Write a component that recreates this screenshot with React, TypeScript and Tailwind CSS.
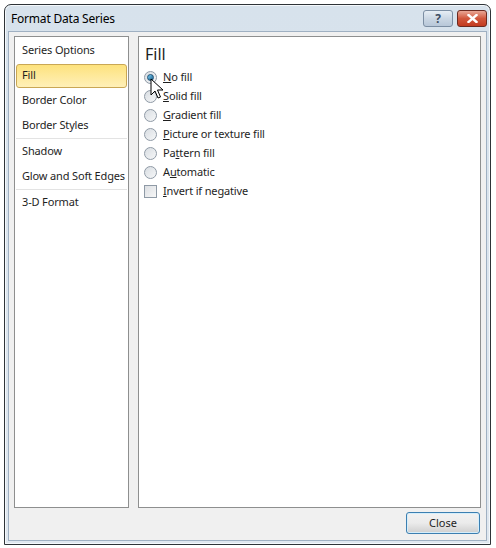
import React from 'react';

const font = { fontFamily: '"Noto Sans", "Open Sans", sans-serif' };

const navItems: { label: string; active?: boolean; sepAfter?: boolean }[] = [
  { label: 'Series Options' },
  { label: 'Fill', active: true },
  { label: 'Border Color' },
  { label: 'Border Styles', sepAfter: true },
  { label: 'Shadow' },
  { label: 'Glow and Soft Edges', sepAfter: true },
  { label: '3-D Format' },
];

const options: { pre: string; key: string; post: string; checked?: boolean }[] = [
  { pre: '', key: 'N', post: 'o fill', checked: true },
  { pre: '', key: 'S', post: 'olid fill' },
  { pre: '', key: 'G', post: 'radient fill' },
  { pre: '', key: 'P', post: 'icture or texture fill' },
  { pre: 'Pa', key: 't', post: 'tern fill' },
  { pre: 'A', key: 'u', post: 'tomatic' },
];

function Radio({ checked }: { checked?: boolean }) {
  return (
    <span className="w-[13px] h-[13px] rounded-full border border-[#8f9aa6] bg-gradient-to-br from-[#d8dde2] to-[#f6f7f8] flex items-center justify-center shrink-0">
      {checked && (
        <span className="w-[7px] h-[7px] rounded-full bg-gradient-to-br from-[#7ad0f6] to-[#1a5f8c] border border-[#1c4f74]" />
      )}
    </span>
  );
}

function Cursor() {
  return (
    <svg className="absolute left-[150px] top-[78px]" width="14" height="22" viewBox="0 0 14 22">
      <path d="M1 1 L1 17 L5 13 L8 20 L10.5 19 L7.5 12 L13 12 Z" fill="#fff" stroke="#000" strokeWidth="1" strokeLinejoin="miter" />
    </svg>
  );
}

export default function App() {
  return (
    <div className="w-[496px] h-[548px] bg-white relative" style={font}>
      <div className="absolute left-[4px] top-[4px] w-[487px] h-[541px] border border-[#2e3338] rounded-t-[7px] bg-gradient-to-b from-[#d7e2ec] to-[#dfe7ef] flex flex-col shadow-[inset_0_0_0_1px_#f4f8fb]">
        {/* title bar */}
        <div className="h-[26px] flex items-center pl-[6px] pr-[3px] pt-[1px]">
          <span className="text-[12px] text-black tracking-[-0.2px]">Format Data Series</span>
          <div className="ml-auto flex gap-[4px] self-start mt-[4px]">
            <div className="w-[30px] h-[17px] rounded-[3px] border border-[#7c8ea3] bg-gradient-to-b from-[#e7eef5] via-[#cbd7e4] to-[#b8c7d8] flex items-center justify-center text-[12px] font-bold text-[#3c4d63] leading-none">
              ?
            </div>
            <div className="w-[30px] h-[17px] rounded-[3px] border border-[#6c2a20] bg-gradient-to-b from-[#e8a695] via-[#d1573c] to-[#c23a1f] flex items-center justify-center">
              <svg width="11" height="9" viewBox="0 0 11 9">
                <path d="M1.5 1 L9.5 8 M9.5 1 L1.5 8" stroke="#fff" strokeWidth="2.4" strokeLinecap="square" />
              </svg>
            </div>
          </div>
        </div>
        {/* client area */}
        <div className="flex-1 mx-[3px] mb-[3px] bg-[#f0f0f0] border border-[#9fb0c2] flex flex-col px-[5px] pt-[4px] pb-[6px]">
          <div className="flex gap-[9px] h-[472px]">
            <div className="w-[115px] bg-white border border-[#8e8f8f] px-[1px] pt-[1px]">
              {navItems.map((it) => (
                <div key={it.label} className={'h-[25px] flex items-center ' + (it.sepAfter ? 'border-b border-[#e3e3e3] h-[26px]' : '')}>
                  <div
                    className={
                      'h-[24px] w-full flex items-center px-[5px] text-[11px] tracking-[-0.15px] whitespace-nowrap text-[#1e1e1e] ' +
                      (it.active
                        ? 'rounded-[3px] border border-[#c9a755] bg-gradient-to-b from-[#fde27c] to-[#fff0b8]'
                        : 'border border-transparent')
                    }
                  >
                    {it.label}
                  </div>
                </div>
              ))}
            </div>
            <div className="flex-1 bg-white border border-[#8e8f8f] pl-[5px] pt-[6px]">
              <div className="text-[16px] text-[#1e1e1e] leading-[22px] pl-[1px]">Fill</div>
              <div className="flex flex-col mt-[3px]">
                {options.map((o) => (
                  <div key={o.post} className="h-[19px] flex items-center gap-[6px] text-[11px] tracking-[-0.15px] text-[#1e1e1e]">
                    <Radio checked={o.checked} />
                    <span>
                      {o.pre}
                      <span className="underline">{o.key}</span>
                      {o.post}
                    </span>
                  </div>
                ))}
                <div className="h-[19px] flex items-center gap-[6px] text-[11px] tracking-[-0.15px] text-[#1e1e1e]">
                  <span className="w-[13px] h-[13px] border border-[#8f9aa6] bg-gradient-to-br from-[#dcdfe3] to-[#f7f7f7] shrink-0" />
                  <span>
                    <span className="underline">I</span>nvert if negative
                  </span>
                </div>
              </div>
            </div>
          </div>
          <div className="flex justify-end mt-[4px] pr-[1px]">
            <div className="w-[74px] h-[22px] rounded-[3px] border border-[#3c7fb1] bg-gradient-to-b from-[#f2f2f2] via-[#ebebeb] to-[#cfcfcf] shadow-[inset_0_0_0_1px_#d5eefb] flex items-center justify-center text-[11px] text-[#1e1e1e]">
              Close
            </div>
          </div>
        </div>
      </div>
      <Cursor />
    </div>
  );
}
